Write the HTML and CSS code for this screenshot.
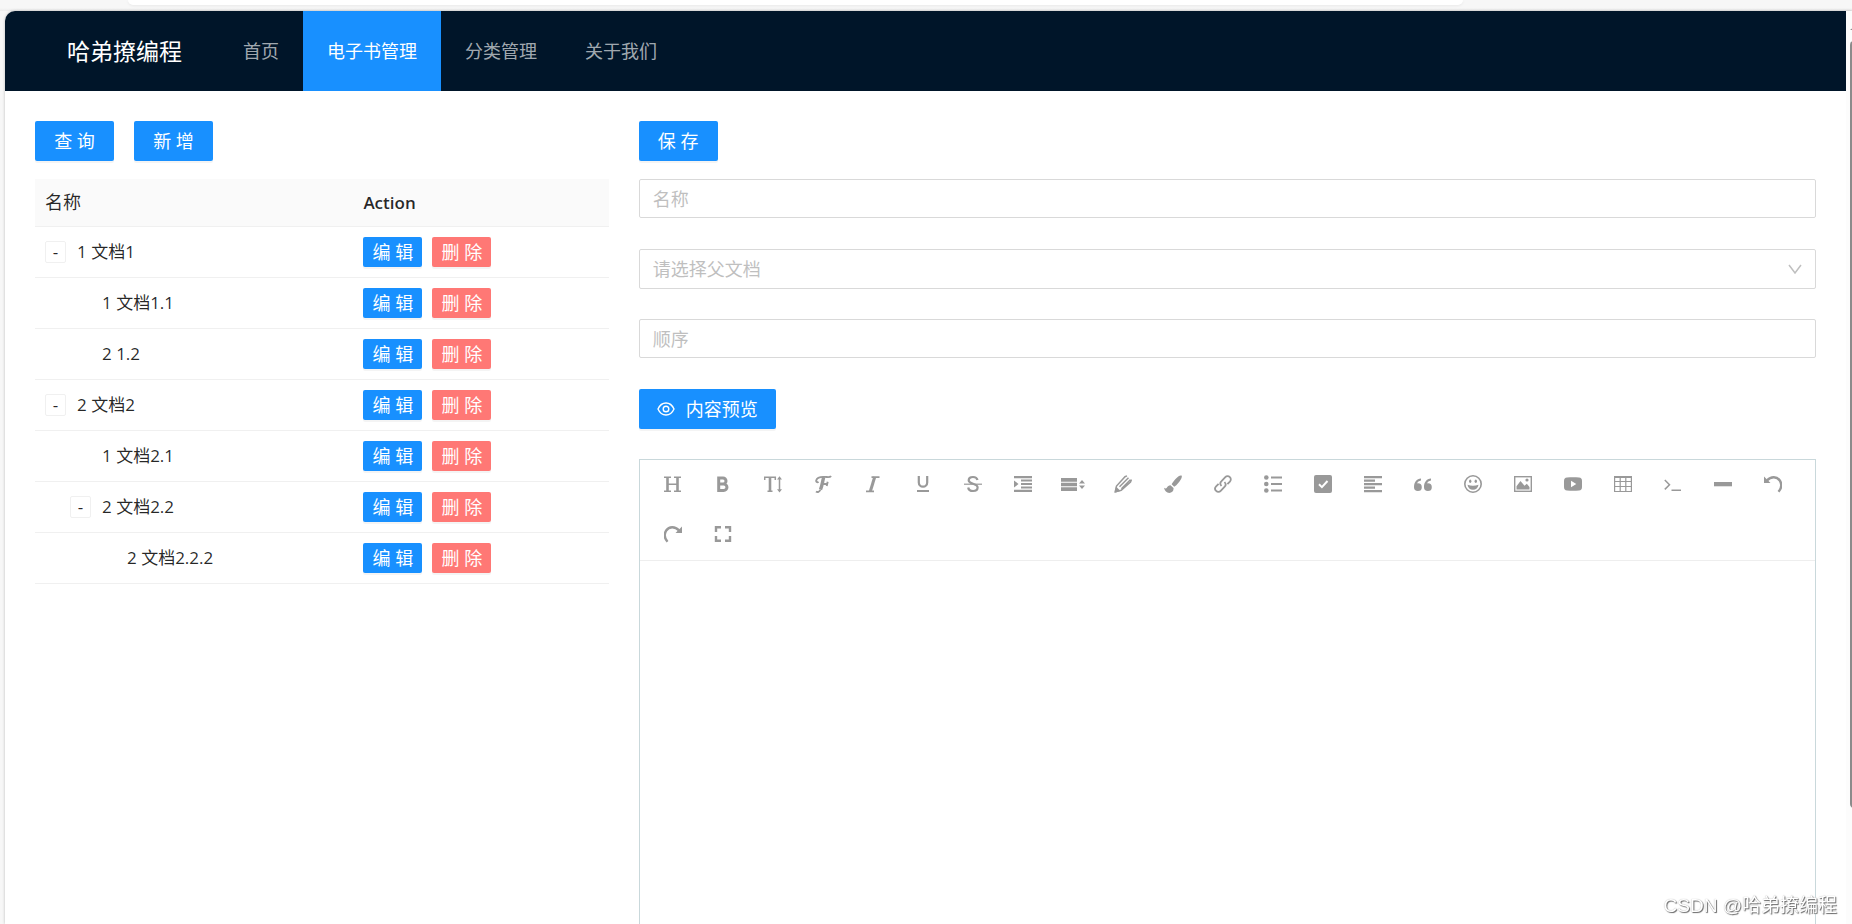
FILE: index.html
```html
<!DOCTYPE html>
<html lang="zh-CN">
<head>
<meta charset="utf-8">
<title>电子书管理</title>
<link rel="stylesheet" href="styles.css">
</head>
<body>
<div class="window">
  <div class="chrome"><div class="omnibox"></div></div>
  <div class="viewport">
    <div class="page">
      <header class="header">
        <div class="logo">哈弟撩编程</div>
        <nav class="menu">
          <a class="menu-item" href="#">首页</a>
          <a class="menu-item active" href="#">电子书管理</a>
          <a class="menu-item" href="#">分类管理</a>
          <a class="menu-item" href="#">关于我们</a>
        </nav>
      </header>
      <main class="content">
        <section class="docs">
          <div class="actions">
            <button class="btn" type="button">查 询</button>
            <button class="btn" type="button">新 增</button>
          </div>
          <table class="table">
            <thead>
              <tr><th class="col-name">名称</th><th>Action</th></tr>
            </thead>
            <tbody>
              <tr><td><div class="cell"><button class="toggle" type="button" aria-label="收起">-</button>1 文档1</div></td><td><div class="ops"><button class="btn small" type="button">编 辑</button><button class="btn small danger" type="button">删 除</button></div></td></tr>
              <tr><td><div class="cell level-1"><span class="spacer"></span>1 文档1.1</div></td><td><div class="ops"><button class="btn small" type="button">编 辑</button><button class="btn small danger" type="button">删 除</button></div></td></tr>
              <tr><td><div class="cell level-1"><span class="spacer"></span>2 1.2</div></td><td><div class="ops"><button class="btn small" type="button">编 辑</button><button class="btn small danger" type="button">删 除</button></div></td></tr>
              <tr><td><div class="cell"><button class="toggle" type="button" aria-label="收起">-</button>2 文档2</div></td><td><div class="ops"><button class="btn small" type="button">编 辑</button><button class="btn small danger" type="button">删 除</button></div></td></tr>
              <tr><td><div class="cell level-1"><span class="spacer"></span>1 文档2.1</div></td><td><div class="ops"><button class="btn small" type="button">编 辑</button><button class="btn small danger" type="button">删 除</button></div></td></tr>
              <tr><td><div class="cell level-1"><button class="toggle" type="button" aria-label="收起">-</button>2 文档2.2</div></td><td><div class="ops"><button class="btn small" type="button">编 辑</button><button class="btn small danger" type="button">删 除</button></div></td></tr>
              <tr><td><div class="cell level-2"><span class="spacer"></span>2 文档2.2.2</div></td><td><div class="ops"><button class="btn small" type="button">编 辑</button><button class="btn small danger" type="button">删 除</button></div></td></tr>
            </tbody>
          </table>
        </section>

        <form class="form">
          <div class="actions"><button class="btn" type="button">保 存</button></div>
          <div class="fields">
            <input class="field" type="text" placeholder="名称" aria-label="名称">
            <div class="select-wrap">
              <select class="field select" aria-label="父文档"><option>请选择父文档</option></select>
              <svg class="chevron" viewBox="0 0 14 10"><path d="M1 1l6 8 6-8"/></svg>
            </div>
            <input class="field" type="text" placeholder="顺序" aria-label="顺序">
            <div>
              <button class="btn preview" type="button">
                <svg class="eye" viewBox="0 0 18 14"><path d="M1 7C2.700 3.200 5.500 1 9 1s6.300 2.200 8 6c-1.700 3.800-4.500 6-8 6S2.700 10.800 1 7z"/><circle cx="9" cy="7" r="2.800"/></svg>
                <span>内容预览</span>
              </button>
            </div>
            <div class="editor">
              <div class="toolbar">
                <button class="tool" type="button" aria-label="标题"><svg viewBox="0 0 18 18"><path class="l" d="M3.500 2v15M13.500 2v15" stroke-width="2.600"/><path class="l" d="M0 2.200h7M10 2.200h7M0 16.300h7M10 16.300h7M3.500 9.300h10" stroke-width="1.600"/></svg></button>
                <button class="tool" type="button" aria-label="加粗"><svg viewBox="0 0 18 18"><path class="l" d="M4.700 3h4.300a3 3 0 0 1 0 6H4.700zM4.700 9h5a3.200 3.200 0 0 1 0 6.500H4.700z" stroke-width="3"/></svg></button>
                <button class="tool" type="button" aria-label="字号"><svg viewBox="0 0 18 18"><path class="l" d="M6 2v15" stroke-width="2.600"/><path class="l" d="M.7 5V2.200h10.600V5M3.500 16.300h5M15.500 3v13" stroke-width="1.500"/><path d="M15.500 1.200l2.500 3.300h-5zM15.500 17.500l2.500-3.300h-5z"/></svg></button>
                <button class="tool" type="button" aria-label="字体"><svg viewBox="0 0 18 18"><path class="l" d="M9.800 2C8.500 6 8.300 10.500 6.500 14.500" stroke-width="3.400"/><path class="l" d="M17 1c-1 1.800-3.500 1-6 .9C6.500 1.600 3 2.800 2.300 5.200c-.5 1.800 1 2.600 2.200 1.600M6.500 14.500C5.500 17 3.500 17.600 2 16.500M8 9h5.500M13.700 6.800l-1 4.200" stroke-width="1.900"/></svg></button>
                <button class="tool" type="button" aria-label="斜体"><svg viewBox="0 0 18 18"><path class="l" d="M10.700 2L6.300 16.500" stroke-width="3"/><path class="l" d="M7.500 2.100h8M2 16.400h8" stroke-width="1.600"/></svg></button>
                <button class="tool" type="button" aria-label="下划线"><svg viewBox="0 0 18 18"><path class="l" d="M4.800 1v6.500a4.200 4.200 0 0 0 8.400 0V1M3 16h12" stroke-width="2.200"/></svg></button>
                <button class="tool" type="button" aria-label="删除线"><svg viewBox="0 0 18 18"><path class="l" d="M13.500 5C13 3 11.300 2 9 2 6.500 2 4.700 3.300 4.700 5.300 4.700 9.600 13.600 8 13.600 12.600c0 2.200-2 3.400-4.500 3.400-2.700 0-4.600-1.200-4.900-3.500" stroke-width="2.200"/><path class="l" d="M0 9.200h18" stroke-width="1.200"/></svg></button>
                <button class="tool" type="button" aria-label="缩进"><svg viewBox="0 0 18 18"><path d="M0 1h18v2.300H0zM7 4.600h11v2H7zM7 8h11v2H7zM7 11.400h11v2H7zM0 14.800h18V17H0zM0 5.500L4.500 9 0 12.500z"/></svg></button>
                <button class="tool" type="button" aria-label="行高"><svg class="wide" viewBox="0 0 24 18"><path d="M0 3h16v3.700H0zM0 7.700h16v3.600H0zM0 12.300h16V16H0zM21 5l3 3.500h-6zM21 14l3-3.500h-6z"/></svg></button>
                <button class="tool" type="button" aria-label="文字颜色"><svg viewBox="0 0 18 18"><path d="M.3 18L2 11.500 6.500 16z"/><path class="l" d="M1.200 16.900L2.500 11 11 1.700 13 .9M1.200 16.900l6-1.700L16.500 7l1-2.500M5.500 11.800l9-9M7.400 13.700l9-9" stroke-width="1.500"/></svg></button>
                <button class="tool" type="button" aria-label="背景色"><svg viewBox="0 0 18 18"><path d="M17.500.5c1.200 1-1 4.800-3 7.300-1.500 2-2.800 3.200-4.300 3.900L7.600 9.200C9 6.500 14.500-.6 17.500.5zM6.500 10.200l3 2.900c.4 2.900-1.600 4.900-4.200 4.900C2.500 18 .8 16 0 12.800c1.300.8 2.300.8 2.800 0 .8-1.500 2-2.500 3.700-2.600z"/></svg></button>
                <button class="tool" type="button" aria-label="链接"><svg viewBox="0 0 18 18"><path class="l" d="M7.500 11C6 9.300 6 7.600 7.300 6.300l4-4.200a3.100 3.100 0 0 1 4.600 4.500l-2.500 2.600M10.500 7c1.500 1.700 1.500 3.400.2 4.700l-4 4.200a3.100 3.100 0 0 1-4.600-4.500l2.500-2.600" stroke-width="1.800"/></svg></button>
                <button class="tool" type="button" aria-label="列表"><svg viewBox="0 0 18 18"><circle cx="2.300" cy="2.500" r="2.300"/><circle cx="2.300" cy="9" r="2.300"/><circle cx="2.300" cy="15.500" r="2.300"/><path d="M7 1.400h11v2.200H7zM7 7.900h11v2.200H7zM7 14.400h11v2.200H7z"/></svg></button>
                <button class="tool" type="button" aria-label="待办"><svg viewBox="0 0 18 18"><rect width="18" height="18" rx="2"/><path d="M5 9.300l2.900 2.800L13.500 6" fill="none" stroke="#fff" stroke-width="2"/></svg></button>
                <button class="tool" type="button" aria-label="对齐"><svg viewBox="0 0 18 18"><path d="M0 1h18v2.200H0zM0 4.500h11v2.200H0zM0 8h18v2.200H0zM0 11.500h11v2.200H0zM0 15h18v2.200H0z"/></svg></button>
                <button class="tool" type="button" aria-label="引用"><svg viewBox="0 0 18 18"><path d="M4 8.300a3.900 3.900 0 1 1-4 4C-.1 7.500 2.500 3.900 7 3.600v2C4.800 6 3.600 7 3.200 8.400z"/><path d="M14 8.300a3.900 3.900 0 1 1-4 4C9.900 7.500 12.500 3.900 17 3.600v2c-2.200.4-3.400 1.400-3.800 2.800z"/></svg></button>
                <button class="tool" type="button" aria-label="表情"><svg viewBox="0 0 18 18"><circle class="l" cx="9" cy="9" r="8.200" stroke-width="1.600"/><ellipse cx="6.200" cy="6.300" rx="1.200" ry="1.700"/><ellipse cx="11.800" cy="6.300" rx="1.200" ry="1.700"/><path d="M3.500 9.800c3.500 1.200 7.500 1.200 11 0-.4 3-2.600 5-5.500 5s-5.100-2-5.500-5z"/></svg></button>
                <button class="tool" type="button" aria-label="图片"><svg viewBox="0 0 18 18"><rect class="l" x=".7" y="1.700" width="16.600" height="14.600" stroke-width="1.400"/><circle cx="13" cy="5" r="1.600"/><path d="M2.500 14.500v-3.300L6.500 6l4 4.700 2.300-2 2.700 3.200v2.600z"/></svg></button>
                <button class="tool" type="button" aria-label="视频"><svg viewBox="0 0 18 18"><path fill-rule="evenodd" d="M3 2.500c4-.4 8-.4 12 0 2 .2 3 1.300 3 3.500v6c0 2.200-1 3.300-3 3.500-4 .4-8 .4-12 0-2-.2-3-1.300-3-3.500V6c0-2.200 1-3.300 3-3.500zM7 5.800v6.400L12.300 9z"/></svg></button>
                <button class="tool" type="button" aria-label="表格"><svg viewBox="0 0 18 18"><path class="l" d="M.6 1.500h16.800v15H.6zM.6 6.500h16.800M.6 11.500h16.800M6.200 2v14.500M11.800 2v14.500" stroke-width="1.200"/><path d="M0 1h18v2H0z"/></svg></button>
                <button class="tool" type="button" aria-label="代码"><svg viewBox="0 0 18 18"><path class="l" d="M.8 5l4.700 4.700L.8 14.400M7.500 15.200H17" stroke-width="1.500"/></svg></button>
                <button class="tool" type="button" aria-label="分割线"><svg viewBox="0 0 18 18"><path d="M0 7h18v4.300H0z"/></svg></button>
                <button class="tool" type="button" aria-label="撤销"><svg viewBox="0 0 18 18"><path d="M0 1.500V8h6.500z"/><path class="l" d="M3 5.500C7 1 13 1.300 15.800 5.500c2.300 3.600 1.700 7.800-1.300 11.300" stroke-width="2.400"/></svg></button>
                <button class="tool" type="button" aria-label="重做"><svg viewBox="0 0 18 18"><path d="M18 1.500V8h-6.500z"/><path class="l" d="M15 5.500C11 1 5 1.300 2.200 5.500-.1 9.100.5 13.300 3.500 16.800" stroke-width="2.400"/></svg></button>
                <button class="tool" type="button" aria-label="全屏"><svg viewBox="0 0 18 18"><path class="l" d="M2 7V2.200h5M11 2.200h5V7M16 11v4.800h-5M7 15.800H2V11" stroke-width="2.400"/></svg></button>
              </div>
              <textarea class="editor-body" aria-label="内容"></textarea>
            </div>
          </div>
        </form>
      </main>
    </div>
    <div class="scrollbar"><div class="arrow"></div><div class="thumb"></div></div>
  </div>
  <div class="watermark">CSDN @哈弟撩编程</div>
</div>
</body>
</html>
```
FILE: styles.css
```css
* { box-sizing: border-box; }

body {
  margin: 0;
  background: #f7f7f7;
  color: rgba(0, 0, 0, .85);
  font-family: "Open Sans", "Noto Sans CJK SC", sans-serif;
  font-size: 18px;
  line-height: 28px;
}

button, input, select, textarea { font: inherit; }

.window {
  display: flex;
  flex-direction: column;
  height: 100vh;
  overflow: hidden;
}

.chrome {
  flex: none;
  height: 11px;
  padding: 0 21% 0 128px;
  background: linear-gradient(#f7f7f7 8px, #ececec);
}

.omnibox {
  height: 5px;
  border-radius: 0 0 14px 14px;
  background: #fff;
  box-shadow: 0 1px 3px rgba(0, 0, 0, .06);
}

.viewport {
  display: flex;
  flex: 1;
  min-height: 0;
  margin-left: 5px;
  border-top-left-radius: 10px;
  overflow: hidden;
  box-shadow: 0 0 3px rgba(0, 0, 0, .25);
}

.page {
  flex: 1;
  min-width: 0;
  overflow: hidden;
  background: #fff;
}

.scrollbar {
  flex: none;
  width: 6px;
  padding: 15px 0 0 4px;
  background: #fcfcfc;
  overflow: hidden;
}

.arrow {
  width: 10px;
  height: 4px;
  background: #8b8b8b;
  clip-path: polygon(0 100%, 50% 0, 100% 100%);
}

.thumb {
  width: 8px;
  height: 85.4%;
  margin-top: 11px;
  border-radius: 4px;
  background: #8b8b8b;
}

.header {
  display: flex;
  height: 80px;
  padding: 0 62px;
  background: #001529;
  line-height: 80px;
}

.logo {
  width: 152px;
  color: #fff;
  font-size: 23px;
}

.menu { display: flex; }

.menu-item {
  padding: 0 24px;
  color: rgba(255, 255, 255, .65);
  text-decoration: none;
}

.menu-item.active {
  background: #1890ff;
  color: #fff;
}

.content {
  display: grid;
  grid-template-columns: repeat(3, minmax(0, 1fr));
  gap: 30px;
  padding: 30px;
}

.form { grid-column: span 2; }

.actions {
  display: flex;
  gap: 20px;
  margin-bottom: 18px;
}

.btn {
  min-width: 79px;
  height: 40px;
  padding: 0 18px;
  border: 0;
  border-radius: 2px;
  background: #1890ff;
  box-shadow: 0 2px 0 rgba(0, 0, 0, .045);
  color: #fff;
  white-space: nowrap;
}

.btn.small {
  min-width: 59px;
  height: 30px;
  padding: 0 9px;
}

.btn.danger { background: #ff7875; }

.table {
  width: 100%;
  border-collapse: separate;
  border-spacing: 0;
  font-size: 17px;
  table-layout: fixed;
}

.table th,
.table td {
  padding: 10px;
  border-bottom: 1px solid #f0f0f0;
  text-align: left;
}

.table th {
  background: #fafafa;
  font-weight: 600;
  line-height: 27px;
}

.table .col-name {
  width: 55.5%;
  font-size: 18px;
  font-weight: 400;
}

.cell, .ops {
  display: flex;
  align-items: center;
  height: 30px;
}

.ops {
  gap: 10px;
  font-size: 18px;
}

.level-1 { padding-left: 25px; }
.level-2 { padding-left: 50px; }

.toggle {
  width: 21px;
  height: 22px;
  margin-right: 11px;
  padding: 0;
  border: 1px solid #f0f0f0;
  border-radius: 2px;
  background: #fff;
  color: inherit;
  line-height: 18px;
}

.spacer { width: 32px; }

.fields {
  display: flex;
  flex-direction: column;
  gap: 30px;
}

.field {
  display: block;
  width: 100%;
  height: 39px;
  margin-bottom: 1px;
  padding: 0 13px;
  border: 1px solid #d9d9d9;
  border-radius: 2px;
  background: #fff;
}

.field::placeholder { color: #bfbfbf; }

.select-wrap { position: relative; }

.select {
  height: 40px;
  margin-bottom: 0;
  appearance: none;
  color: #bfbfbf;
}

.chevron {
  position: absolute;
  top: 15px;
  right: 14px;
  width: 14px;
  height: 10px;
  fill: none;
  stroke: #bfbfbf;
  stroke-width: 1.5;
}

.preview {
  display: flex;
  align-items: center;
  gap: 11px;
}

.eye {
  width: 18px;
  height: 14px;
  fill: none;
  stroke: #fff;
  stroke-width: 1.4;
}

.editor { border: 1px solid #c9d8db; }

.toolbar {
  display: flex;
  flex-wrap: wrap;
  padding: 0 8px;
  border-bottom: 1px solid #eee;
}

.tool {
  display: flex;
  align-items: center;
  justify-content: center;
  width: 50px;
  height: 50px;
  padding: 0 0 2px;
  border: 0;
  background: none;
}

.tool svg {
  flex: none;
  width: 18px;
  height: 18px;
  fill: #999;
}

.tool svg.wide { width: 24px; }

.tool .l {
  fill: none;
  stroke: #999;
}

.editor-body {
  display: block;
  width: 100%;
  height: 625px;
  padding: 0 12px;
  border: 0;
  resize: none;
}

.watermark {
  position: fixed;
  right: 15px;
  bottom: 4px;
  color: #fff;
  font-family: "Liberation Sans", "Noto Sans CJK SC", sans-serif;
  font-size: 19px;
  text-shadow: 1px 1px 1px #666, 0 0 1px #aaa;
}
```
